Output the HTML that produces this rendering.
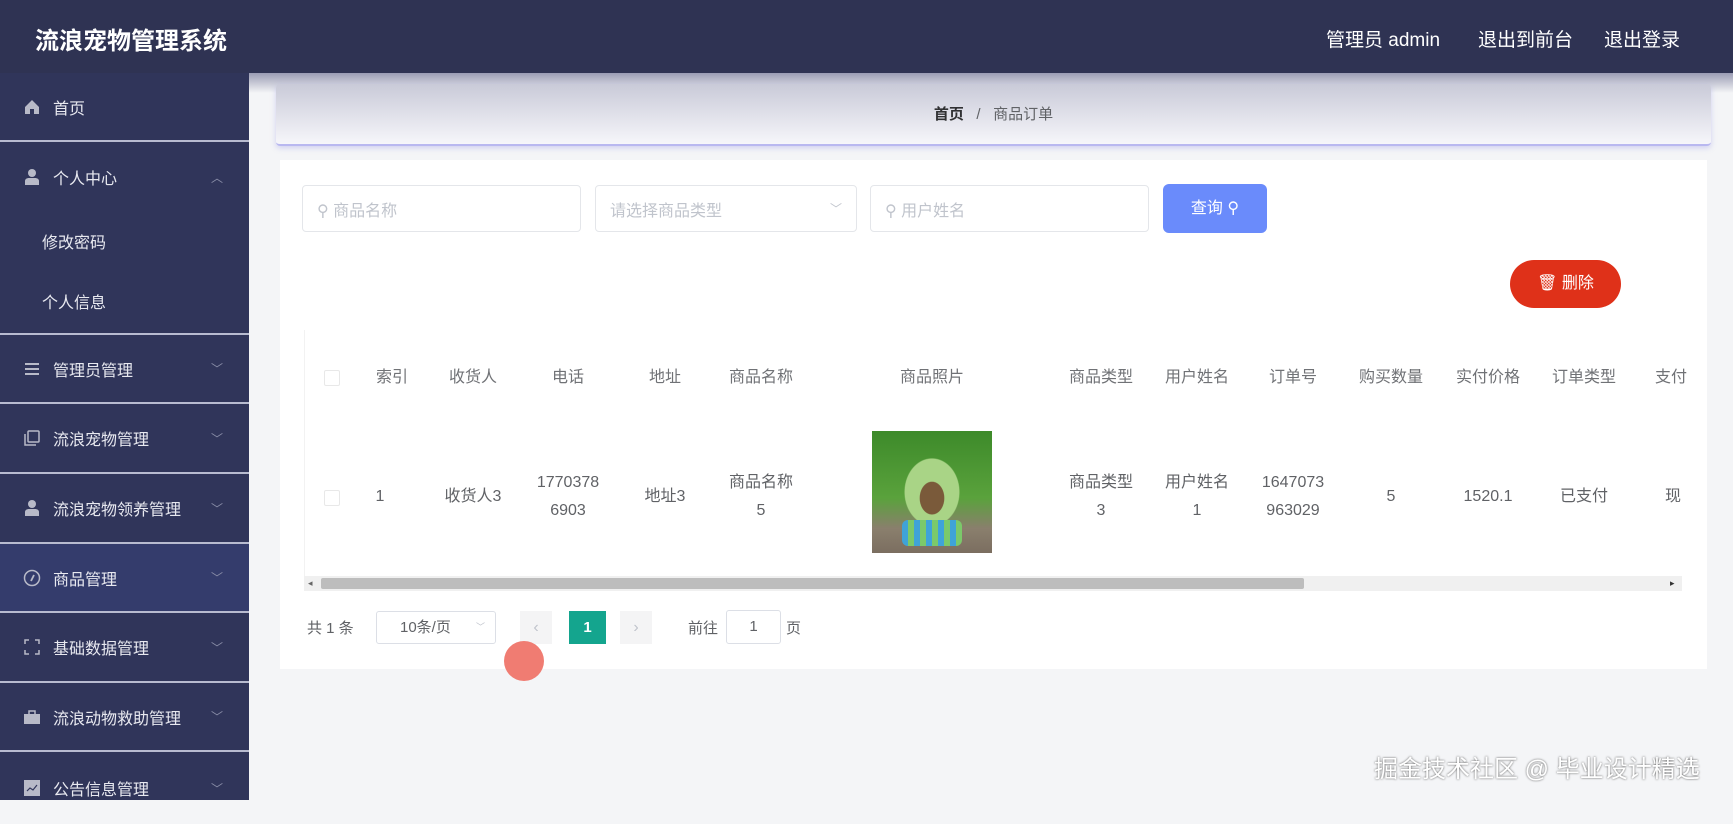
<!DOCTYPE html>
<html><head><meta charset="utf-8"><style>
*{margin:0;padding:0;box-sizing:border-box}
body{width:1733px;height:800px;overflow:hidden;background:#f4f5f7;font-family:"Liberation Sans","Noto Sans CJK SC",sans-serif;position:relative}
.a{position:absolute}
#hdr{left:0;top:0;width:1733px;height:73px;background:#2f3353}
#side{left:0;top:73px;width:249px;height:727px;background:#30355a}
.it{position:absolute;left:0;width:249px;color:#e8e9f0;font-size:16px;display:flex;align-items:center}
.it svg{width:18px;height:18px;margin-left:23px;margin-right:12px;flex:none}
.it .ar{position:absolute;right:26px;color:#8a8ea8;font-size:12px}
.dv{position:absolute;left:0;width:249px;height:2px;background:#b8bbd0}
.th,.td{position:absolute;color:#606266;font-size:16px;text-align:center;transform:translateX(-50%);white-space:nowrap;line-height:28px}
.th{top:364px;color:#707276}
.inp{position:absolute;top:185px;height:47px;border:1px solid #e4e6ea;border-radius:4px;background:#fff;color:#c0c4cc;font-size:16px;display:flex;align-items:center;padding-left:14px}
</style></head><body>
<div id="hdr" class="a">
<div class="a" style="left:35px;top:21px;color:#fff;font-size:24px;font-weight:bold">流浪宠物管理系统</div>
<div class="a" style="left:1326px;top:25px;color:#fff;font-size:19px">管理员 admin</div>
<div class="a" style="left:1478px;top:25px;color:#fff;font-size:19px">退出到前台</div>
<div class="a" style="left:1604px;top:25px;color:#fff;font-size:19px">退出登录</div>
</div>
<div id="side" class="a"></div>
<div class="it" style="top:74px;height:66px"><svg viewBox="0 0 18 18"><path d="M2 9 9 2l7 7v7h-5v-5H7v5H2z" fill="#b8bac8"/></svg>首页</div>
<div class="dv" style="top:140px"></div>
<div class="it" style="top:142px;height:70px"><svg viewBox="0 0 18 18"><circle cx="9" cy="5" r="4" fill="#b8bac8"/><path d="M2 17v-4c0-2 2-3 4-3h6c2 0 4 1 4 3v4z" fill="#b8bac8"/></svg>个人中心<span class="ar">︿</span></div>
<div class="it" style="top:212px;height:58px;padding-left:42px">修改密码</div>
<div class="it" style="top:272px;height:58px;padding-left:42px">个人信息</div>
<div class="dv" style="top:333px"></div>
<div class="it" style="top:335px;height:67px"><svg viewBox="0 0 18 18"><path d="M2 4h14M2 9h14M2 14h14" stroke="#b8bac8" stroke-width="2"/></svg>管理员管理<span class="ar">﹀</span></div>
<div class="dv" style="top:402px"></div>
<div class="it" style="top:404px;height:68px"><svg viewBox="0 0 18 18"><rect x="5" y="2" width="11" height="11" rx="1" fill="none" stroke="#b8bac8" stroke-width="1.5"/><path d="M2 5v11h11" fill="none" stroke="#b8bac8" stroke-width="1.5"/></svg>流浪宠物管理<span class="ar">﹀</span></div>
<div class="dv" style="top:472px"></div>
<div class="it" style="top:474px;height:68px"><svg viewBox="0 0 18 18"><circle cx="9" cy="5" r="4" fill="#b8bac8"/><path d="M2 17v-4c0-2 2-3 4-3h6c2 0 4 1 4 3v4z" fill="#b8bac8"/></svg>流浪宠物领养管理<span class="ar">﹀</span></div>
<div class="dv" style="top:542px"></div>
<div class="it" style="top:544px;height:67px;background:#343c6c"><svg viewBox="0 0 18 18"><circle cx="9" cy="9" r="7.5" fill="none" stroke="#b8bac8" stroke-width="1.5"/><path d="M11 6 8 12" stroke="#b8bac8" stroke-width="1.8"/></svg>商品管理<span class="ar">﹀</span></div>
<div class="dv" style="top:611px"></div>
<div class="it" style="top:613px;height:68px"><svg viewBox="0 0 18 18"><path d="M2 6V2h4M12 2h4v4M16 12v4h-4M6 16H2v-4" fill="none" stroke="#b8bac8" stroke-width="1.5"/></svg>基础数据管理<span class="ar">﹀</span></div>
<div class="dv" style="top:681px"></div>
<div class="it" style="top:683px;height:67px"><svg viewBox="0 0 18 18"><rect x="1" y="6" width="16" height="10" fill="#b8bac8"/><path d="M6 6V3h6v3" fill="none" stroke="#b8bac8" stroke-width="1.5"/></svg>流浪动物救助管理<span class="ar">﹀</span></div>
<div class="dv" style="top:750px"></div>
<div class="it" style="top:752px;height:72px"><svg viewBox="0 0 18 18"><rect x="1" y="1" width="16" height="16" fill="#b8bac8"/><path d="M4 12l3-3 3 2 4-5" fill="none" stroke="#30355a" stroke-width="1.2"/></svg>公告信息管理<span class="ar">﹀</span></div>

<div class="a" style="left:249px;top:73px;width:1484px;height:20px;background:linear-gradient(#9a9cb4,#f4f5f7)"></div>
<div class="a" style="left:276px;top:84px;width:1435px;height:62px;border-radius:4px;background:linear-gradient(#c9cad8,#f6f6fa);border-bottom:2px solid #b9b8f0;box-shadow:0 2px 6px rgba(140,140,230,.35);text-align:center;line-height:62px;font-size:15px;color:#606266"><b style="color:#303133">首页</b>&nbsp;&nbsp;&nbsp;/&nbsp;&nbsp;&nbsp;商品订单</div>
<div class="a" style="left:280px;top:160px;width:1427px;height:509px;background:#fff"></div>
<div class="inp" style="left:302px;width:279px">⚲&nbsp;商品名称</div>
<div class="inp" style="left:595px;width:262px">请选择商品类型<span style="position:absolute;right:14px;font-size:12px">﹀</span></div>
<div class="inp" style="left:870px;width:279px">⚲&nbsp;用户姓名</div>
<div class="a" style="left:1163px;top:184px;width:104px;height:49px;background:#6a8bfb;border-radius:6px;color:#fff;font-size:16px;text-align:center;line-height:49px">查询 ⚲</div>
<div class="a" style="left:1510px;top:260px;width:111px;height:48px;background:#df3119;border-radius:24px;color:#fff;font-size:16px;text-align:center;line-height:48px">🗑 删除</div>

<div class="a" style="left:304px;top:330px;width:1378px;height:246px;background:#fff;border-left:1px solid #f2f2f2"></div>
<div class="a" style="left:324px;top:370px;width:16px;height:16px;border:1px solid #e8e8e8;border-radius:2px"></div>
<div class="a" style="left:324px;top:490px;width:16px;height:16px;border:1px solid #e8e8e8;border-radius:2px"></div>
<div class="th" style="left:392px">索引</div><div class="th" style="left:473px">收货人</div><div class="th" style="left:568px">电话</div><div class="th" style="left:665px">地址</div><div class="th" style="left:761px">商品名称</div><div class="th" style="left:932px">商品照片</div><div class="th" style="left:1101px">商品类型</div><div class="th" style="left:1197px">用户姓名</div><div class="th" style="left:1293px">订单号</div><div class="th" style="left:1391px">购买数量</div><div class="th" style="left:1488px">实付价格</div><div class="th" style="left:1584px">订单类型</div><div class="th" style="left:1655px;transform:none">支付</div>
<div class="td" style="left:380px;top:483px">1</div>
<div class="td" style="left:473px;top:483px">收货人3</div>
<div class="td" style="left:568px;top:469px">1770378<br>6903</div>
<div class="td" style="left:665px;top:483px">地址3</div>
<div class="td" style="left:761px;top:469px">商品名称<br>5</div>
<div class="a" style="left:872px;top:431px;width:120px;height:122px;background:radial-gradient(ellipse 30px 40px at 50% 55%,#7a5a3a 40%,transparent 42%),radial-gradient(ellipse 45px 55px at 50% 50%,#a9d486 60%,transparent 62%),linear-gradient(#3d8a2a,#5aa23c 55%,#8a7f6d 80%,#7b6e60)"></div>
<div class="a" style="left:902px;top:520px;width:60px;height:26px;background:repeating-linear-gradient(90deg,#3fa3d8 0 6px,#7bc96a 6px 12px);border-radius:6px"></div>
<div class="td" style="left:1101px;top:469px">商品类型<br>3</div>
<div class="td" style="left:1197px;top:469px">用户姓名<br>1</div>
<div class="td" style="left:1293px;top:469px">1647073<br>963029</div>
<div class="td" style="left:1391px;top:483px">5</div>
<div class="td" style="left:1488px;top:483px">1520.1</div>
<div class="td" style="left:1584px;top:483px">已支付</div>
<div class="td" style="left:1665px;top:483px;transform:none">现</div>
<div class="a" style="left:304px;top:576px;width:1378px;height:15px;background:#f0f0f0"></div>
<div class="a" style="left:321px;top:578px;width:983px;height:11px;background:#bdbdbd;border-radius:2px"></div>
<div class="a" style="left:308px;top:578px;font-size:9px;color:#666">◂</div>
<div class="a" style="left:1670px;top:578px;font-size:9px;color:#333">▸</div>

<div class="a" style="left:307px;top:617px;font-size:15px;color:#606266">共 1 条</div>
<div class="a" style="left:376px;top:611px;width:120px;height:33px;border:1px solid #dcdfe6;border-radius:3px;font-size:15px;color:#606266;line-height:31px;padding-left:23px">10条/页<span style="position:absolute;right:10px;font-size:9px;color:#c0c4cc">﹀</span></div>
<div class="a" style="left:520px;top:611px;width:32px;height:33px;background:#f4f4f5;color:#c0c4cc;text-align:center;line-height:33px">‹</div>
<div class="a" style="left:569px;top:611px;width:37px;height:33px;background:#14a58e;color:#fff;font-weight:bold;text-align:center;line-height:33px;font-size:15px">1</div>
<div class="a" style="left:620px;top:611px;width:32px;height:33px;background:#f4f4f5;color:#c0c4cc;text-align:center;line-height:33px">›</div>
<div class="a" style="left:688px;top:617px;font-size:15px;color:#606266">前往</div>
<div class="a" style="left:726px;top:610px;width:55px;height:34px;border:1px solid #dcdfe6;border-radius:3px;text-align:center;line-height:32px;font-size:15px;color:#606266">1</div>
<div class="a" style="left:786px;top:617px;font-size:15px;color:#606266">页</div>
<div class="a" style="left:504px;top:641px;width:40px;height:40px;border-radius:50%;background:#f07c72"></div>
<div class="a" style="left:1374px;top:749px;font-size:24px;color:#fff;text-shadow:0 0 2px #555">掘金技术社区 @ 毕业设计精选</div>
</body></html>
